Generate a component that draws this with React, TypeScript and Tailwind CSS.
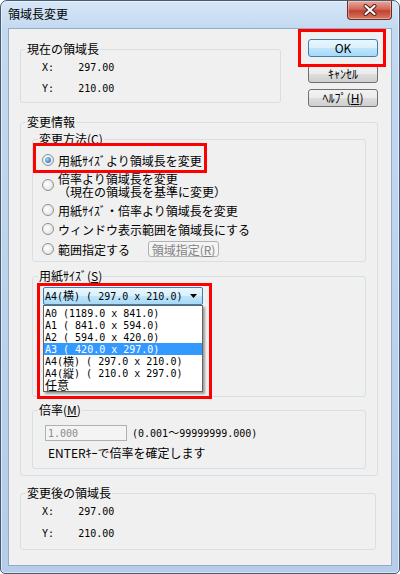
import React from "react";

const mono = "font-['DejaVu_Sans_Mono','Noto_Sans_CJK_JP',monospace] text-[10px] whitespace-pre";

function Group({
  label,
  className = "",
  children,
}: {
  label: React.ReactNode;
  className?: string;
  children: React.ReactNode;
}) {
  return (
    <fieldset className={`border border-[#d5dfe5] rounded-[3px] ${className}`}>
      <legend className="ml-[5px] px-[1px] text-[12px] leading-[14px]">{label}</legend>
      {children}
    </fieldset>
  );
}

function Btn({ children, def = false, className = "" }: { children: React.ReactNode; def?: boolean; className?: string }) {
  return (
    <div
      className={`h-[18px] flex items-center justify-center rounded-[3px] border text-[12px] leading-none ${
        def
          ? "border-[#3c7fb1] bg-[linear-gradient(#eaf6fd,#d9f0fc_50%,#bee6fd_50%,#a7d9f5)]"
          : "border-[#707070] bg-[linear-gradient(#f2f2f2,#ebebeb_50%,#dddddd_50%,#cfcfcf)]"
      } ${className}`}
    >
      {children}
    </div>
  );
}

function Radio({ checked = false }: { checked?: boolean }) {
  return (
    <span className="w-[12px] h-[12px] shrink-0 rounded-full border border-[#8e8f8f] bg-[radial-gradient(circle_at_40%_40%,#ffffff,#dcdcdc)] flex items-center justify-center">
      {checked && (
        <span className="w-[6px] h-[6px] rounded-full bg-[radial-gradient(circle_at_35%_35%,#9cd6ff,#1a62b0)]" />
      )}
    </span>
  );
}

function XY({ label, value }: { label: string; value: string }) {
  return (
    <div className={`h-[14px] flex items-center ${mono}`}>
      {label}
      {"    "}
      {value}
    </div>
  );
}

function Kanji({ children }: { children: React.ReactNode }) {
  return <span className="font-['Noto_Sans_CJK_JP',sans-serif] text-[11px] leading-[11px]">{children}</span>;
}

const sizes: { a: string; k?: string; rest: string }[] = [
  { a: "A0 (1189.0 x 841.0)", rest: "" },
  { a: "A1 ( 841.0 x 594.0)", rest: "" },
  { a: "A2 ( 594.0 x 420.0)", rest: "" },
  { a: "A3 ( 420.0 x 297.0)", rest: "" },
  { a: "A4(", k: "横", rest: ") ( 297.0 x 210.0)" },
  { a: "A4(", k: "縦", rest: ") ( 210.0 x 297.0)" },
];

export default function App() {
  return (
    <div className="relative w-[400px] h-[574px] bg-white font-['Noto_Sans_CJK_JP','Noto_Sans',sans-serif] text-[12px] text-black">
      <div className="flex flex-col w-full h-full rounded-t-[7px] rounded-b-[5px] border border-[#4a5c73] bg-[linear-gradient(180deg,#d6e6f7_0px,#c3d9f0_28px,#b5cde9_100%)] shadow-[inset_0_0_0_1px_rgba(255,255,255,0.5)]">
        {/* title bar */}
        <div className="h-[27px] shrink-0 flex items-start justify-between px-[7px]">
          <span className="mt-[6px] leading-[14px]">領域長変更</span>
          <div className="w-[45px] h-[19px] rounded-b-[4px] border border-t-0 border-[#6b2c24] bg-[linear-gradient(#e9a99c,#d1695a_45%,#c0412f_55%,#d97a62)] flex items-center justify-center shadow-[inset_0_0_0_1px_rgba(255,255,255,0.35)]">
            <svg width="14" height="12" viewBox="0 0 14 12">
              <path d="M2.5 2 L11.5 10 M11.5 2 L2.5 10" stroke="#4a1c16" strokeWidth="4" strokeLinecap="round" />
              <path d="M2.5 2 L11.5 10 M11.5 2 L2.5 10" stroke="#ffffff" strokeWidth="2.2" strokeLinecap="round" />
            </svg>
          </div>
        </div>

        {/* client */}
        <div className="flex-1 mx-[7px] mb-[7px] border border-[#98abc3] bg-[#f0f0f0] pt-[10px] pl-[11px] pr-[13px] flex flex-col">
          <div className="flex items-start">
            <Group label="現在の領域長" className="w-[261px] mt-[3px]">
              <div className="pt-[4px] pb-[7px] pl-[21px] flex flex-col gap-[7px]">
                <XY label="X:" value="297.00" />
                <XY label="Y:" value="210.00" />
              </div>
            </Group>
            <div className="ml-auto w-[70px] flex flex-col">
              <Btn def>OK</Btn>
              <Btn className="mt-[8px]">ｷｬﾝｾﾙ</Btn>
              <Btn className="mt-[6px]">
                ﾍﾙﾌﾟ(<span className="underline">H</span>)
              </Btn>
            </div>
          </div>

          <Group label="変更情報" className="mt-[8px] w-full">
            <div className="px-[11px] pt-[3px] pb-[6px] flex flex-col">
              <Group label="変更方法(C)">
                <div className="pt-[7px] pb-[4px] pl-[9px] flex flex-col gap-[5px] leading-[13px]">
                  <div className="h-[14px] flex items-center gap-[4px]">
                    <Radio checked />
                    <span>用紙ｻｲｽﾞより領域長を変更</span>
                  </div>
                  <div className="flex items-center gap-[4px]">
                    <Radio />
                    <div className="flex flex-col">
                      <span>倍率より領域長を変更</span>
                      <span>（現在の領域長を基準に変更）</span>
                    </div>
                  </div>
                  <div className="h-[14px] flex items-center gap-[4px]">
                    <Radio />
                    <span>用紙ｻｲｽﾞ・倍率より領域長を変更</span>
                  </div>
                  <div className="h-[14px] flex items-center gap-[4px]">
                    <Radio />
                    <span>ウィンドウ表示範囲を領域長にする</span>
                  </div>
                  <div className="h-[16px] flex items-center gap-[4px]">
                    <Radio />
                    <span>範囲指定する</span>
                    <div className="ml-[14px] w-[71px] h-[16px] rounded-[3px] border border-[#adb2b5] bg-[#f4f4f4] text-[#838383] flex items-center justify-center">
                      領域指定(<span className="underline">R</span>)
                    </div>
                  </div>
                </div>
              </Group>

              <Group
                label={
                  <>
                    用紙ｻｲｽﾞ(<span className="underline">S</span>)
                  </>
                }
                className="mt-[7px]"
              >
                <div className="h-[113px] pt-[4px] pl-[10px]">
                  <div className="relative w-[160px] h-[18px]">
                    <div className={`h-full rounded-[2px] border border-[#3c7fb1] bg-[linear-gradient(#eaf6fd,#d9f0fc_50%,#bee6fd_50%,#a7d9f5)] flex items-center pl-[1px] pr-[5px] ${mono}`}>
                      <span>
                        A4(<Kanji>横</Kanji>) ( 297.0 x 210.0)
                      </span>
                      <svg className="ml-auto" width="7" height="4" viewBox="0 0 7 4">
                        <path d="M0 0 H7 L3.5 4 Z" fill="#000" />
                      </svg>
                    </div>
                    <div className="absolute top-[18px] left-0 w-[160px] bg-white border border-[#646464] shadow-[2px_2px_2px_rgba(0,0,0,0.35)] pt-[1px] flex flex-col">
                      {sizes.map((s, i) => (
                        <div
                          key={i}
                          className={`h-[12px] flex items-center pl-[1px] ${mono} ${i === 3 ? "bg-[#3399ff] text-white" : ""}`}
                        >
                          {s.a}
                          {s.k && <Kanji>{s.k}</Kanji>}
                          {s.rest}
                        </div>
                      ))}
                      <div className="h-[12px] flex items-center pl-[1px] leading-none">任意</div>
                    </div>
                  </div>
                </div>
              </Group>

              <Group
                label={
                  <>
                    倍率(<span className="underline">M</span>)
                  </>
                }
                className="mt-[6px]"
              >
                <div className="pt-[8px] pb-[8px] pl-[12px]">
                  <div className="flex items-center">
                    <div className={`w-[82px] h-[16px] border border-[#adb2b5] bg-[#f4f4f4] text-[#8a8a8a] flex items-center pl-[2px] ${mono}`}>
                      1.000
                    </div>
                    <span className={`ml-[5px] ${mono}`}>
                      (0.001<Kanji>～</Kanji>99999999.000)
                    </span>
                  </div>
                  <div className="mt-[5px] h-[14px] pl-[3px] flex items-center">ENTERｷｰで倍率を確定します</div>
                </div>
              </Group>
            </div>
          </Group>

          <Group label="変更後の領域長" className="mt-[10px] w-[356px]">
            <div className="pt-[4px] pb-[9px] pl-[21px] flex flex-col gap-[8px]">
              <XY label="X:" value="297.00" />
              <XY label="Y:" value="210.00" />
            </div>
          </Group>
        </div>
      </div>

      {/* red highlight marks */}
      <div className="absolute left-[298px] top-[29px] w-[88px] h-[38px] border-[3px] border-[#ff0000]" />
      <div className="absolute left-[33px] top-[143px] w-[174px] h-[30px] border-[3px] border-[#ff0000]" />
      <div className="absolute left-[37px] top-[283px] w-[175px] h-[116px] border-[3px] border-[#ff0000]" />
    </div>
  );
}
